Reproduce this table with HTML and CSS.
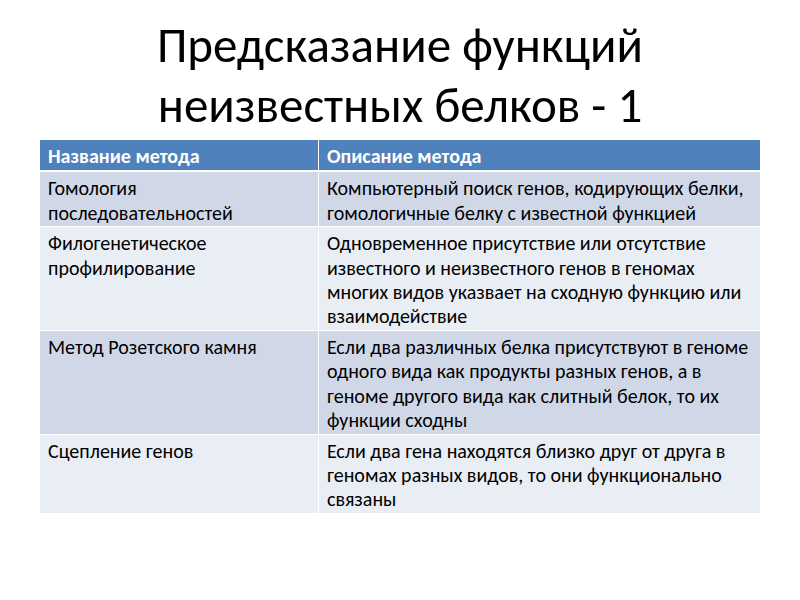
FILE: index.html
```html
<!DOCTYPE html>
<html lang="ru">
<head>
<meta charset="utf-8">
<title>Предсказание функций неизвестных белков - 1</title>
<link rel="stylesheet" href="styles.css">
</head>
<body>
<div class="slide">
  <h1 class="title">Предсказание функций<br>неизвестных белков - 1</h1>
  <table class="methods">
    <thead>
      <tr><th class="c1">Название метода</th><th>Описание метода</th></tr>
    </thead>
    <tbody>
      <tr class="odd"><td>Гомология последовательностей</td><td>Компьютерный поиск генов, кодирующих белки, гомологичные белку с известной функцией</td></tr>
      <tr class="even"><td>Филогенетическое профилирование</td><td>Одновременное присутствие или отсутствие известного и неизвестного генов в геномах многих видов указвает на сходную функцию или взаимодействие</td></tr>
      <tr class="odd"><td>Метод Розетского камня</td><td>Если два различных белка присутствуют в геноме одного вида как продукты разных генов, а в геноме другого вида как слитный белок, то их функции сходны</td></tr>
      <tr class="even"><td>Сцепление генов</td><td>Если два гена находятся близко друг от друга в геномах разных видов, то они функционально связаны</td></tr>
    </tbody>
  </table>
</div>
</body>
</html>
```
FILE: styles.css
```css
html, body {
  margin: 0;
  padding: 0;
  background: #ffffff;
}
.slide {
  width: 800px;
  height: 600px;
  font-family: Carlito, "Liberation Sans", sans-serif;
  color: #000000;
  padding-top: 15px;
  box-sizing: border-box;
}
.title {
  margin: 0;
  font-weight: normal;
  font-size: 49px;
  line-height: 60px;
  text-align: center;
}
.methods {
  margin: 5px 0 0 40px;
  width: 720px;
  border-collapse: collapse;
  table-layout: fixed;
  font-size: 20px;
  line-height: 24.3px;
}
.methods th, .methods td {
  text-align: left;
  vertical-align: top;
  padding: 4px 9px 1.5px 8px;
  border: 1px solid #ffffff;
}
.methods tr > :first-child { border-left: none; }
.methods tr > :last-child { border-right: none; }
.methods thead th {
  background: #4f81bd;
  color: #ffffff;
  font-weight: bold;
  padding: 4px 9px 2px 8px;
  border-top: none;
  border-bottom-width: 2px;
}
.methods .c1 { width: 261px; }
.methods .odd td { background: #d0d8e8; }
.methods .even td { background: #e9edf4; }
```
